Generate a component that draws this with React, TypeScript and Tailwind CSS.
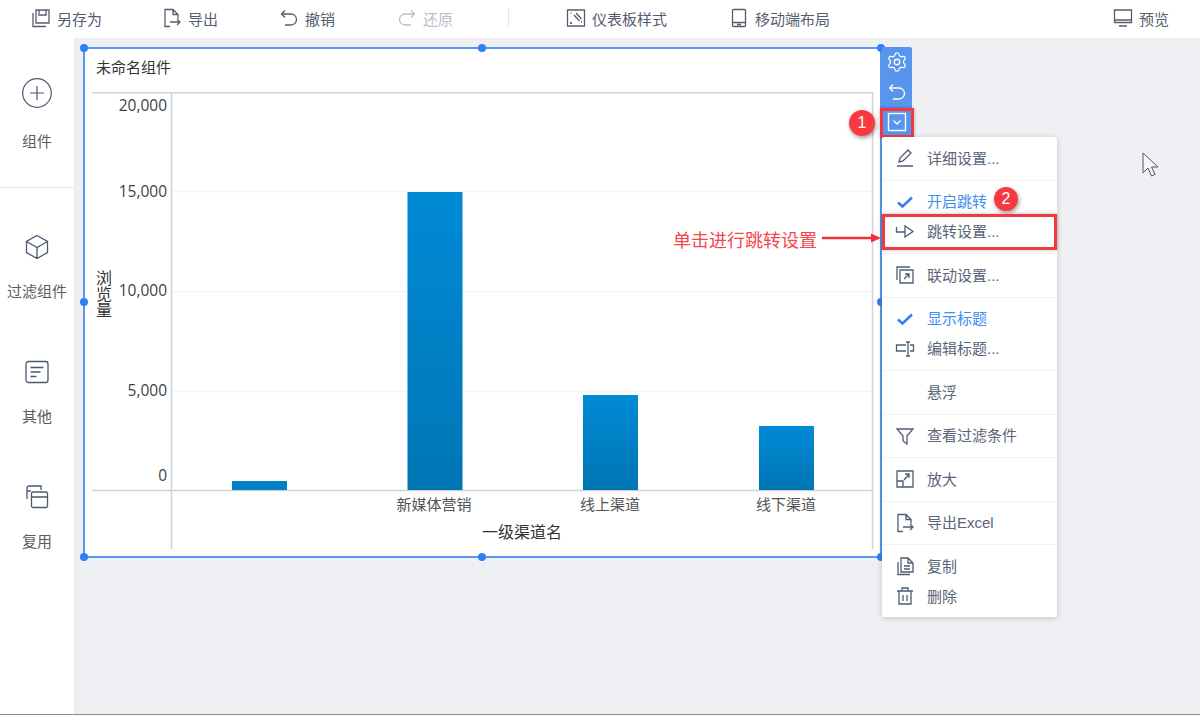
import React from "react";
import { Settings } from "lucide-react";

const font = { fontFamily: '"Noto Sans CJK SC", "Noto Sans", sans-serif' };
const menuFont = { fontFamily: '"Liberation Sans", "Noto Sans CJK SC", sans-serif' };

type IP = { className?: string; size?: number; children: React.ReactNode };
const Ic = ({ className = "", size = 20, children }: IP) => (
  <svg width={size} height={size} viewBox="0 0 20 20" fill="none" stroke="currentColor" strokeWidth={1.3} className={className}>
    {children}
  </svg>
);

const SaveAs = () => (
  <Ic><path d="M5 2h13v13H5zM8 2v5h7V2M2 5v13.500h13" /></Ic>
);
const ExportI = () => (
  <Ic><path d="M8 18.500H3V1.500h8l5 5v4M11 1.500v5h5M8 14h10M15 11l3 3-3 3" /></Ic>
);
const Undo = () => (
  <Ic><path d="M6 2.500L2.500 6 6 9.500M2.500 6H12a5 5 0 0 1 0 11H6" /></Ic>
);
const Redo = () => (
  <Ic><path d="M14 2.500L17.500 6 14 9.500M17.500 6H8a5 5 0 0 0 0 11h6" /></Ic>
);
const Style = () => (
  <Ic><path d="M1.500 2h17v16h-17zM8 7l5.500 6M10 5l5.500 6M4.500 5h1M5 14v2M4 15h2M15 14h1" /></Ic>
);
const Mobile = () => (
  <Ic><path d="M4.500 1.500h11a1 1 0 0 1 1 1v15a1 1 0 0 1-1 1h-11a1 1 0 0 1-1-1v-15a1 1 0 0 1 1-1zM3.500 14.500h13M8 16.500h4" /></Ic>
);
const Monitor = () => (
  <Ic><path d="M1.500 2h17v12.500h-17zM1.500 12h17M6 18h8" /></Ic>
);
const Pencil = () => (
  <Ic><path d="M4 14l1-4 8-8 3 3-8 8zM2 18h16" /></Ic>
);
const Check = () => (
  <svg width="18" height="18" viewBox="0 0 18 18" fill="none" stroke="#3680ee" strokeWidth={2.600}><path d="M2 9.500l4.500 4L16 4.500" /></svg>
);
const Jump = () => (
  <Ic><path d="M1.500 5v5H10M10 4v11l8-5.500z" /></Ic>
);
const Link = () => (
  <Ic><path d="M5 18V5h13v13zM2 15V2h13M9 14l5-5M10 9h4v4" /></Ic>
);
const TitleI = () => (
  <Ic><path d="M11 6H1.500v6H11M15 6h3.500v6H15M11 3h4M11 17h4M13 3v14" /></Ic>
);
const Funnel = () => (
  <Ic><path d="M2 3h16l-6 7v8l-4-3v-5z" /></Ic>
);
const Enlarge = () => (
  <Ic><path d="M2 2h16v16H2zM2 12h6v6M9 11l5-6M10 5h4v4" /></Ic>
);
const Copy = () => (
  <Ic><path d="M6 2h7l5 5v9H6zM13 2v5h5M9 10h6M9 13h6M3 6v12.500h12" /></Ic>
);
const Trash = () => (
  <Ic><path d="M2 5h16M7 5V2h6v3M4 5v13h12V5M8 9v6M12 9v6" /></Ic>
);

const ToolItem = ({ icon, label, className = "" }: { icon: React.ReactNode; label: string; className?: string }) => (
  <div className={`flex items-center gap-[6px] text-[15px] leading-none ${className}`}>
    {icon}
    <span>{label}</span>
  </div>
);

const SideItem = ({ icon, label, className = "", labelClass = "mt-[16px]" }: { icon: React.ReactNode; label: string; className?: string; labelClass?: string }) => (
  <div className={`flex flex-col items-center ${className}`}>
    <div className="flex h-[34px] items-center text-[#4a5872]">{icon}</div>
    <div className={`text-[15px] leading-[22px] text-[#5c5c5c] whitespace-nowrap ${labelClass}`}>{label}</div>
  </div>
);

const Row = ({ icon, label, active }: { icon?: React.ReactNode; label: string; active?: boolean }) => (
  <div className="flex h-[30px] items-center">
    <div className="flex w-[45px] justify-center text-[#4f5c75]">{icon}</div>
    <span className={`text-[15px] leading-none ${active ? "text-[#3f8cf3]" : "text-[#5a6579]"}`}>{label}</span>
  </div>
);

const Group = ({ children, last }: { children: React.ReactNode; last?: boolean }) => (
  <div className={`pt-[6px] ${last ? "pb-[6px]" : "pb-[6.500px] border-b border-[#f2f3f5]"}`}>{children}</div>
);

const Handle = ({ className }: { className: string }) => (
  <div className={`absolute h-[8px] w-[8px] rounded-full bg-[#2f80f5] ${className}`} />
);

const Bubble = ({ n, className }: { n: string; className: string }) => (
  <div className={`absolute flex items-center justify-center rounded-full bg-[#f8393f] text-white text-[16px] shadow-[1px_2px_4px_rgba(0,0,0,0.4)] ${className}`} style={{ fontFamily: '"Liberation Sans", sans-serif' }}>
    {n}
  </div>
);

const Chart = () => (
  <svg width="795" height="464" viewBox="85 92 795 464" className="block" style={font}>
    <defs>
      <linearGradient id="bar" x1="0" y1="0" x2="0" y2="1">
        <stop offset="0" stopColor="#008ad6" />
        <stop offset="1" stopColor="#0076b4" />
      </linearGradient>
    </defs>
    <g stroke="#f3f3f3" strokeWidth="1.500">
      <path d="M172 191.500H872M172 291.500H872M172 391.500H872" />
    </g>
    <g stroke="#d2d2d2" strokeWidth="1.500">
      <path d="M92 92.800H873M171.500 92V549M872.500 92V549M92 490.500H873" />
    </g>
    <rect x="232" y="481" width="55" height="9" fill="#0081c6" />
    <rect x="407.500" y="192" width="55" height="298" fill="url(#bar)" />
    <rect x="583" y="395" width="55" height="95" fill="url(#bar)" />
    <rect x="759" y="426" width="55" height="64" fill="url(#bar)" />
    <g fill="#3f3f3f" fontSize="15.500" textAnchor="end" style={{ fontFamily: '"Open Sans", sans-serif' }}>
      <text x="167" y="111">20,000</text>
      <text x="167" y="197">15,000</text>
      <text x="167" y="296">10,000</text>
      <text x="167" y="396">5,000</text>
      <text x="167" y="481">0</text>
    </g>
    <g fill="#555" fontSize="15" textAnchor="middle">
      <text x="434" y="510">新媒体营销</text>
      <text x="610" y="510">线上渠道</text>
      <text x="786" y="510">线下渠道</text>
    </g>
    <text x="522" y="538" fill="#333" fontSize="16" textAnchor="middle">一级渠道名</text>
    <text x="104" y="270" fill="#333" fontSize="16" style={{ writingMode: "vertical-rl" }}>浏览量</text>
  </svg>
);

export default function App() {
  return (
    <div className="flex h-[715px] w-[1200px] flex-col overflow-hidden bg-white" style={font}>
      <header className="flex h-[38px] shrink-0 items-center bg-white pl-[31px] pr-[31px] pb-[2px] text-[#555e70]">
        <ToolItem icon={<SaveAs />} label="另存为" />
        <ToolItem className="ml-[60px]" icon={<ExportI />} label="导出" />
        <ToolItem className="ml-[61px]" icon={<Undo />} label="撤销" />
        <ToolItem className="ml-[62px] text-[#b9bec6]" icon={<Redo />} label="还原" />
        <div className="ml-[55px] h-[20px] w-px bg-[#e6e7ea]" />
        <ToolItem className="ml-[57px]" icon={<Style />} label="仪表板样式" />
        <ToolItem className="ml-[62px]" icon={<Mobile />} label="移动端布局" />
        <ToolItem className="ml-auto" icon={<Monitor />} label="预览" />
      </header>

      <div className="flex min-h-0 flex-1">
        <aside className="flex w-[75px] shrink-0 flex-col border-r border-[#e8e9ee] bg-white">
          <div className="h-[150px] border-b border-[#e8e9ec] pt-[38px]">
            <SideItem labelClass="mt-[20px]" label="组件" icon={
              <svg width="30" height="30" viewBox="0 0 30 30" fill="none" stroke="currentColor" strokeWidth="1.200"><circle cx="15" cy="15" r="14.300" /><path d="M15 8v14M8 15h14" /></svg>
            } />
          </div>
          <SideItem className="mt-[42px]" label="过滤组件" icon={
            <svg width="26" height="26" viewBox="0 0 26 26" fill="none" stroke="currentColor" strokeWidth="1.300"><path d="M13 1.500l10.500 6v11L13 24.500l-10.500-6v-11zM2.500 7.500L13 13.500l10.500-6M13 13.500v11" /></svg>
          } />
          <SideItem className="mt-[53px]" label="其他" icon={
            <svg width="26" height="26" viewBox="0 0 26 26" fill="none" stroke="currentColor" strokeWidth="1.300"><rect x="2" y="2.500" width="22" height="21" rx="2.500" /><path d="M6.500 8.500h13M6.500 13h10M6.500 17.500h6" /></svg>
          } />
          <SideItem className="mt-[53px]" label="复用" icon={
            <svg width="26" height="26" viewBox="0 0 26 26" fill="none" stroke="currentColor" strokeWidth="1.300"><path d="M3 15V4a2 2 0 0 1 2-2h12v4" /><rect x="7.500" y="8" width="16" height="15.500" rx="1.500" /><path d="M7.500 13h16M3 7h4" /></svg>
          } />
        </aside>

        <main className="relative flex-1 bg-[#eff0f4]">
          <div className="absolute left-[8px] top-[9px] flex h-[511px] w-[799px] flex-col border-2 border-[#5c97ef] bg-white">
            <div className="flex h-[43px] shrink-0 items-center pl-[11px] pb-[7px] text-[15px] text-[#333]">未命名组件</div>
            <Chart />
            <Handle className="-left-[5px] -top-[5px]" />
            <Handle className="left-[393px] -top-[5px]" />
            <Handle className="-right-[5px] -top-[5px]" />
            <Handle className="-left-[5px] top-[249px]" />
            <Handle className="-right-[5px] top-[249px]" />
            <Handle className="-left-[5px] -bottom-[5px]" />
            <Handle className="left-[393px] -bottom-[5px]" />
            <Handle className="-right-[5px] -bottom-[5px]" />
          </div>

          {/* widget action strip */}
          <div className="absolute left-[807px] top-[9px] flex h-[90px] w-[30px] flex-col items-center rounded-tr-[2px] bg-[#5896ee] text-white">
            <div className="flex h-[30px] items-center"><Settings size={22} strokeWidth={1.400} /></div>
            <div className="flex h-[30px] items-center"><Undo /></div>
            <div className="flex h-[30px] items-center">
              <svg width="20" height="20" viewBox="0 0 20 20" fill="none" stroke="currentColor" strokeWidth="1.400"><rect x="1.500" y="1.500" width="17" height="17" /><path d="M6.500 8.500L10 12l3.500-3.500" /></svg>
            </div>
          </div>
          <div className="absolute left-[805px] top-[70px] h-[30px] w-[34px] border-[3px] border-[#f03a3f] shadow-[0_0_3px_rgba(0,0,0,0.3)]" />
          <Bubble n="1" className="left-[774px] top-[72px] h-[26px] w-[26px]" />

          {/* context menu */}
          <div className="absolute left-[807px] top-[99px] w-[175px] rounded-[2px] bg-white shadow-[0_1px_6px_rgba(0,0,0,0.18)]" style={menuFont}>
            <Group><Row icon={<Pencil />} label="详细设置..." /></Group>
            <Group>
              <Row icon={<Check />} label="开启跳转" active />
              <Row icon={<Jump />} label="跳转设置..." />
            </Group>
            <Group><Row icon={<Link />} label="联动设置..." /></Group>
            <Group>
              <Row icon={<Check />} label="显示标题" active />
              <Row icon={<TitleI />} label="编辑标题..." />
            </Group>
            <Group><Row label="悬浮" /></Group>
            <Group><Row icon={<Funnel />} label="查看过滤条件" /></Group>
            <Group><Row icon={<Enlarge />} label="放大" /></Group>
            <Group><Row icon={<ExportI />} label="导出Excel" /></Group>
            <Group last>
              <Row icon={<Copy />} label="复制" />
              <Row icon={<Trash />} label="删除" />
            </Group>
          </div>

          {/* annotations */}
          <Bubble n="2" className="left-[919px] top-[149px] h-[24px] w-[24px]" />
          <div className="absolute left-[807px] top-[176px] h-[36px] w-[175px] border-[3px] border-[#f03a3f] shadow-[0_0_3px_rgba(0,0,0,0.3)]" />
          <div className="absolute left-[598px] top-[188px] text-[18px] leading-[26px] text-[#f4474a]">单击进行跳转设置</div>
          <svg width="62" height="12" viewBox="0 0 62 12" className="absolute left-[746px] top-[194px]">
            <path d="M1 6h52" stroke="#ee3338" strokeWidth="2.600" />
            <path d="M50 1.500l10 4.500-10 4.500z" fill="#ee3338" />
          </svg>
          <svg width="20" height="28" viewBox="0 0 20 28" className="absolute left-[1066px] top-[113px]">
            <path d="M2 2v20l5-5 3.500 8 3.500-1.500L10.500 16H17z" fill="#f6f6f8" stroke="#555" strokeWidth="1" />
          </svg>
        </main>
      </div>
      <div className="h-px shrink-0 bg-[#8c8c8c]" />
    </div>
  );
}
